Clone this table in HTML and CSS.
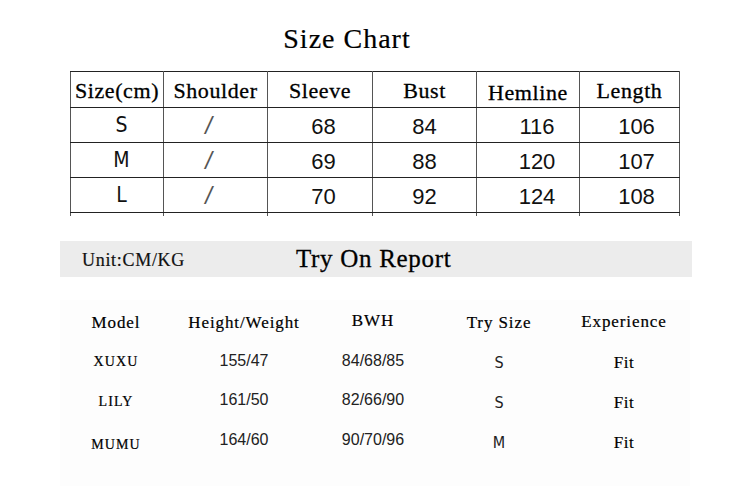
FILE: index.html
```html
<!DOCTYPE html>
<html>
<head>
<meta charset="utf-8">
<link rel="stylesheet" href="styles.css">
</head>
<body>
<div class="page">
  <h1 class="title">Size Chart</h1>
  <table class="chart">
    <colgroup>
      <col class="c1"><col class="c2"><col class="c3"><col class="c4"><col class="c5"><col class="c6">
    </colgroup>
    <tr class="head">
      <th>Size(cm)</th><th>Shoulder</th><th>Sleeve</th><th>Bust</th><th class="hem">Hemline</th><th>Length</th>
    </tr>
    <tr class="row">
      <td class="sz">S</td><td class="sl">/</td><td class="n1">68</td><td>84</td><td class="n2">116</td><td class="n3">106</td>
    </tr>
    <tr class="row">
      <td class="sz">M</td><td class="sl">/</td><td class="n1">69</td><td>88</td><td class="n2">120</td><td class="n3">107</td>
    </tr>
    <tr class="row">
      <td class="sz">L</td><td class="sl">/</td><td class="n1">70</td><td>92</td><td class="n2">124</td><td class="n3">108</td>
    </tr>
    <tr class="tail">
      <td></td><td></td><td></td><td></td><td></td><td></td>
    </tr>
  </table>

  <div class="band">
    <span class="unit">Unit:CM/KG</span>
    <span class="report">Try On Report</span>
  </div>

  <div class="report-table">
    <div class="grid">
      <div class="h">Model</div>
      <div class="h">Height/Weight</div>
      <div class="h bwh">BWH</div>
      <div class="h">Try Size</div>
      <div class="h exp">Experience</div>

      <div class="name">XUXU</div>
      <div class="num">155/47</div>
      <div class="num">84/68/85</div>
      <div class="ts">S</div>
      <div class="fit">Fit</div>

      <div class="name">LILY</div>
      <div class="num up">161/50</div>
      <div class="num up">82/66/90</div>
      <div class="ts">S</div>
      <div class="fit">Fit</div>

      <div class="name down">MUMU</div>
      <div class="num up">164/60</div>
      <div class="num up">90/70/96</div>
      <div class="ts">M</div>
      <div class="fit">Fit</div>
    </div>
  </div>
</div>
</body>
</html>
```

FILE: styles.css
```css
* { box-sizing: border-box; }
html, body {
  margin: 0;
  padding: 0;
  background: #ffffff;
}
body {
  width: 750px;
  height: 486px;
  overflow: hidden;
  font-family: "Liberation Serif", "Times New Roman", serif;
  color: #111;
}
.page {
  display: flex;
  flex-direction: column;
}
.title {
  margin: 23px 0 0 0;
  height: 32px;
  line-height: 32px;
  font-size: 28px;
  font-weight: normal;
  letter-spacing: 1px;
  text-align: center;
  padding-right: 56px;
  color: #000;
  -webkit-text-stroke: 0.2px #000;
}
.chart {
  margin: 16px 0 0 70px;
  border-collapse: collapse;
  table-layout: fixed;
  width: 609px;
}
.c1 { width: 93px; }
.c2 { width: 104px; }
.c3 { width: 105px; }
.c4 { width: 104px; }
.c5 { width: 103px; }
.c6 { width: 100px; }
.chart th, .chart td {
  border-left: 1px solid #555;
  border-right: 1px solid #555;
  border-top: 1px solid #222;
  border-bottom: 1px solid #222;
  padding: 0;
  text-align: center;
}
.chart .head th {
  height: 36px;
  font-weight: normal;
  font-size: 22px;
  letter-spacing: 0.6px;
  line-height: 24px;
  padding-top: 2px;
  color: #000;
  -webkit-text-stroke: 0.3px #000;
}
.chart .head th.hem { padding-top: 6px; }
.chart .row td {
  height: 35px;
  font-family: "Liberation Sans", Arial, sans-serif;
  font-size: 22px;
  line-height: 24px;
  padding-top: 3px;
  color: #111;
}
.chart td.sz {
  font-family: "Liberation Sans Narrow", "DejaVu Sans Condensed", "Liberation Sans", sans-serif;
  font-size: 21px;
  padding-left: 9px;
  padding-top: 0;
}
.chart td.sl {
  font-family: "Liberation Sans", Arial, sans-serif;
  font-size: 24px;
  font-style: italic;
  padding-right: 14px;
  padding-top: 2px;
  color: #555;
}
.chart td.n1 { padding-left: 7px; }
.chart td.n2 { padding-left: 18px; }
.chart td.n3 { padding-left: 14px; }
.chart .tail td {
  height: 3px;
  border-top: 1px solid #222;
  border-bottom: none;
}
.band {
  margin: 25px 0 0 60px;
  width: 632px;
  height: 36px;
  background: #ececec;
  display: flex;
  align-items: center;
  padding-left: 22px;
}
.unit {
  font-size: 18px;
  letter-spacing: 0.7px;
  color: #111;
  padding-top: 3px;
  width: 214px;
  -webkit-text-stroke: 0.2px #111;
}
.report {
  font-size: 25px;
  letter-spacing: 0.7px;
  color: #000;
  -webkit-text-stroke: 0.3px #000;
}
.report-table {
  margin: 23px 0 0 60px;
  width: 630px;
  height: 186px;
  background: #fdfdfd;
  padding-top: 3px;
}
.grid {
  display: grid;
  grid-template-columns: 112px 144px 114px 138px 112px;
  grid-auto-rows: 40px;
  align-items: center;
  justify-items: center;
}
.h {
  font-size: 17px;
  letter-spacing: 0.9px;
  color: #000;
  -webkit-text-stroke: 0.2px #000;
}
.h.bwh { margin-top: -4px; }
.h.exp { margin-top: -2px; }
.name {
  font-size: 14px;
  letter-spacing: 1.1px;
  color: #000;
  margin-top: -2px;
  -webkit-text-stroke: 0.2px #000;
}
.name.down { margin-top: 4px; }
.num {
  font-family: "Liberation Sans", Arial, sans-serif;
  font-size: 16px;
  color: #222;
  margin-top: -3px;
}
.num.up { margin-top: -6px; }
.ts {
  font-family: "Liberation Sans Narrow", "DejaVu Sans Condensed", "Liberation Sans", sans-serif;
  font-size: 16px;
  color: #222;
}
.fit {
  font-size: 17px;
  letter-spacing: 0.5px;
  color: #000;
  -webkit-text-stroke: 0.2px #000;
}
```
